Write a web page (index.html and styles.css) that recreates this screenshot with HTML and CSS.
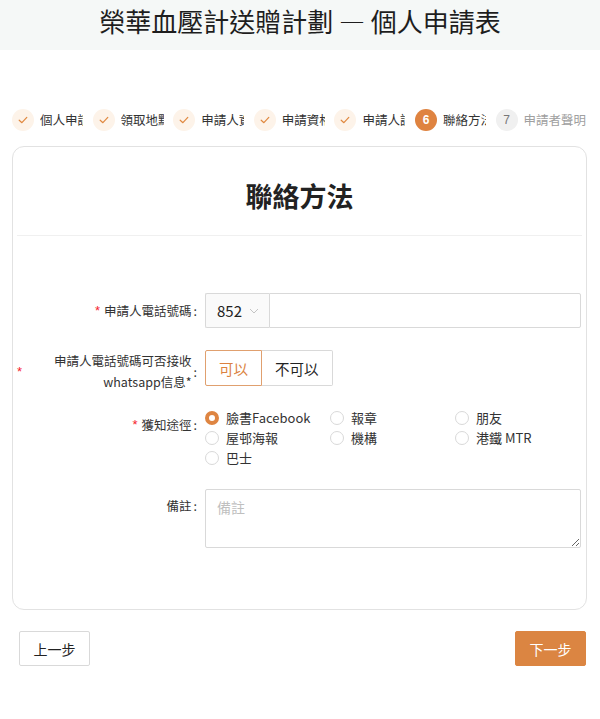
FILE: index.html
```html
<!DOCTYPE html>
<html lang="zh-Hant">
<head>
<meta charset="utf-8">
<title>榮華血壓計送贈計劃 — 個人申請表</title>
<link rel="stylesheet" href="styles.css">
</head>
<body>
<header class="top"><h1 class="top-title">榮華血壓計送贈計劃 — 個人申請表</h1></header>

<nav class="steps">
  <div class="step done"><span class="dot"><svg viewBox="0 0 12 12" width="12" height="12"><path d="M2.2 6.2 L4.9 8.7 L9.8 3.4" fill="none" stroke="#e0883f" stroke-width="1.2" stroke-linecap="round" stroke-linejoin="round"/></svg></span><span class="lbl">個人申請資料</span></div>
  <div class="step done"><span class="dot"><svg viewBox="0 0 12 12" width="12" height="12"><path d="M2.2 6.2 L4.9 8.7 L9.8 3.4" fill="none" stroke="#e0883f" stroke-width="1.2" stroke-linecap="round" stroke-linejoin="round"/></svg></span><span class="lbl">領取地點</span></div>
  <div class="step done"><span class="dot"><svg viewBox="0 0 12 12" width="12" height="12"><path d="M2.2 6.2 L4.9 8.7 L9.8 3.4" fill="none" stroke="#e0883f" stroke-width="1.2" stroke-linecap="round" stroke-linejoin="round"/></svg></span><span class="lbl">申請人資料</span></div>
  <div class="step done"><span class="dot"><svg viewBox="0 0 12 12" width="12" height="12"><path d="M2.2 6.2 L4.9 8.7 L9.8 3.4" fill="none" stroke="#e0883f" stroke-width="1.2" stroke-linecap="round" stroke-linejoin="round"/></svg></span><span class="lbl">申請資格</span></div>
  <div class="step done"><span class="dot"><svg viewBox="0 0 12 12" width="12" height="12"><path d="M2.2 6.2 L4.9 8.7 L9.8 3.4" fill="none" stroke="#e0883f" stroke-width="1.2" stroke-linecap="round" stroke-linejoin="round"/></svg></span><span class="lbl">申請人證明</span></div>
  <div class="step current"><span class="dot">6</span><span class="lbl">聯絡方法</span></div>
  <div class="step wait"><span class="dot">7</span><span class="lbl lbl-full">申請者聲明</span></div>
</nav>

<main class="card">
  <h2 class="card-title">聯絡方法</h2>
  <div class="form">
    <div class="row row-phone">
      <div class="lab"><span class="req">*</span><span>申請人電話號碼</span><span class="colon">:</span></div>
      <div class="ctl phone">
        <div class="cc"><span>852</span><svg class="chev" viewBox="0 0 10 6" width="10" height="6"><path d="M1 1 L5 5 L9 1" fill="none" stroke="#c4c4c4" stroke-width="1"/></svg></div>
        <input class="phone-input" type="text">
      </div>
    </div>

    <div class="row row-wa">
      <div class="lab lab-wrap"><span class="req">*</span><span class="wrap-text">申請人電話號碼可否接收<br>whatsapp信息*</span><span class="colon">:</span></div>
      <div class="ctl">
        <div class="seg">
          <span class="seg-btn on">可以</span><span class="seg-btn">不可以</span>
        </div>
      </div>
    </div>

    <div class="row row-src">
      <div class="lab lab-top"><span class="req">*</span><span>獲知途徑</span><span class="colon">:</span></div>
      <div class="ctl opts">
        <span class="opt"><span class="radio on"></span>臉書Facebook</span>
        <span class="opt"><span class="radio"></span>報章</span>
        <span class="opt"><span class="radio"></span>朋友</span>
        <span class="opt"><span class="radio"></span>屋邨海報</span>
        <span class="opt"><span class="radio"></span>機構</span>
        <span class="opt"><span class="radio"></span>港鐵 MTR</span>
        <span class="opt"><span class="radio"></span>巴士</span>
      </div>
    </div>

    <div class="row row-note">
      <div class="lab lab-top"><span>備註</span><span class="colon">:</span></div>
      <div class="ctl"><textarea class="note" placeholder="備註"></textarea></div>
    </div>
  </div>
</main>

<div class="actions">
  <button class="btn">上一步</button>
  <button class="btn primary">下一步</button>
</div>
</body>
</html>
```

FILE: styles.css
```css
* { box-sizing: border-box; }
body {
  margin: 0;
  background: #fff;
  color: #333;
  font-family: "Noto Sans CJK TC", "Noto Sans", "Liberation Sans", sans-serif;
  font-size: 13px;
}
.top {
  background: #f5f8f7;
  height: 50px;
  display: flex;
  justify-content: center;
}
.top-title {
  margin: 0;
  font-size: 26px;
  font-weight: 400;
  line-height: 42px;
  color: #1e1e1e;
}

.steps {
  display: flex;
  align-items: center;
  margin-top: 59px;
  padding-left: 12px;
  height: 22px;
}
.step {
  display: flex;
  align-items: center;
  margin-right: 9.6px;
}
.dot {
  width: 22px;
  height: 22px;
  border-radius: 50%;
  display: flex;
  align-items: center;
  justify-content: center;
  flex-shrink: 0;
  font-size: 12px;
  font-family: "Liberation Sans", sans-serif;
}
.done .dot { background: #fdf3e9; }
.current .dot { background: #df8340; color: #fff; font-weight: 700; }
.wait .dot { background: #f0f0f0; color: #777; }
.lbl {
  margin-left: 6px;
  width: 43px;
  overflow: hidden;
  white-space: nowrap;
  font-size: 12.5px;
  line-height: 22px;
  color: #333;
}
.lbl-full { width: auto; }
.wait .lbl { color: #a0a0a0; }

.card {
  margin: 15px 13px 0 12px;
  border: 1px solid #e2e2e2;
  border-radius: 12px;
  padding: 0 4px 61px;
}
.card-title {
  margin: 0;
  padding: 32px 0 22px;
  line-height: 34px;
  font-size: 27px;
  font-weight: 700;
  text-align: center;
  color: #222;
  border-bottom: 1px solid #f0f0f0;
}
.form {
  padding-top: 57px;
}
.row {
  display: grid;
  grid-template-columns: 181px 376px;
  column-gap: 7px;
}
.lab {
  display: flex;
  justify-content: flex-end;
  align-items: center;
  color: #333;
  font-size: 12.5px;
}
.req {
  color: #f5222d;
  margin-right: 4px;
  font-family: "Liberation Sans", sans-serif;
  font-size: 13px;
}
.colon {
  margin-left: 2px;
  margin-right: 1px;
}
.row-phone { height: 35px; margin-bottom: 22px; }
.phone {
  display: flex;
  height: 35px;
}
.cc {
  width: 64px;
  border: 1px solid #d9d9d9;
  border-right: none;
  border-radius: 2px 0 0 2px;
  background: #fafafa;
  display: flex;
  align-items: center;
  padding-left: 11px;
  font-size: 15px;
  color: #222;
}
.chev { margin-left: 7px; }
.phone-input {
  flex: 1;
  border: 1px solid #d9d9d9;
  border-radius: 0 2px 2px 0;
  outline: none;
}

.row-wa { height: 36px; margin-bottom: 22px; }
.lab-wrap { justify-content: flex-start; }
.wrap-text {
  flex: 1;
  text-align: right;
  line-height: 21px;
}
.seg { display: flex; height: 36px; }
.seg-btn {
  display: flex;
  align-items: center;
  padding: 0 13px;
  border: 1px solid #d9d9d9;
  font-size: 14.5px;
  color: #222;
  background: #fff;
}
.seg-btn + .seg-btn { border-left: none; }
.seg-btn:first-child { border-radius: 2px 0 0 2px; }
.seg-btn:last-child { border-radius: 0 2px 2px 0; }
.seg-btn.on { border-color: #e0a06f; color: #db8240; }

.row-src { margin-bottom: 21px; }
.lab-top {
  align-items: flex-start;
  line-height: 32px;
  margin-top: 1px;
}
.lab-top .req { line-height: 32px; }
.opts {
  display: grid;
  grid-template-columns: 125px 125px 126px;
  grid-auto-rows: 20px;
}
.opt {
  display: flex;
  align-items: center;
  font-size: 13px;
  color: #333;
  margin-top: -1px;
}
.radio {
  width: 14px;
  height: 14px;
  border-radius: 50%;
  border: 1px solid #d9d9d9;
  background: #fff;
  margin-right: 7px;
  flex-shrink: 0;
}
.radio.on { border: 4px solid #de8542; }

.note {
  display: block;
  width: 376px;
  height: 59px;
  border: 1px solid #d9d9d9;
  border-radius: 2px;
  padding: 7px 11px;
  font-family: "Noto Sans CJK TC", "Noto Sans", sans-serif;
  font-size: 14px;
  color: #333;
  outline: none;
}
.note::placeholder { color: #bfbfbf; }

.actions {
  display: flex;
  justify-content: space-between;
  margin-top: 21px;
  padding: 0 14px 0 19px;
}
.btn {
  height: 35px;
  width: 71px;
  border: 1px solid #d9d9d9;
  border-radius: 2px;
  background: #fff;
  color: #222;
  font-family: "Noto Sans CJK TC", "Noto Sans", sans-serif;
  font-size: 14px;
  padding: 0;
}
.btn.primary {
  background: #db8542;
  border-color: #db8542;
  color: #fff;
}
```
